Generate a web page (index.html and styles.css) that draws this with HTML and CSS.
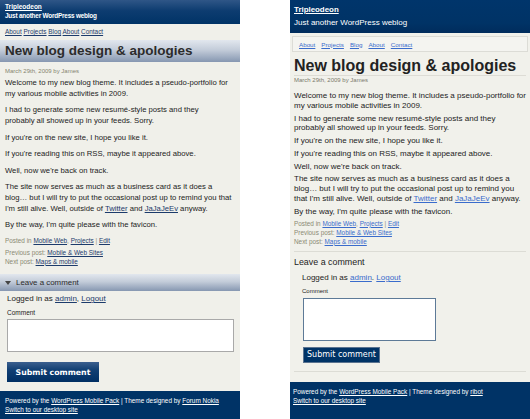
FILE: index.html
```html
<!DOCTYPE html>
<html>
<head>
<meta charset="utf-8">
<link rel="stylesheet" href="styles.css">
</head>
<body>
<div class="screens">
  <div class="phone lp">
    <header class="l-head">
      <a class="l-site" href="#">Tripleodeon</a>
      <div class="l-tag">Just another WordPress weblog</div>
    </header>
    <nav class="l-nav"><a href="#">About</a> <a href="#">Projects</a> <a href="#">Blog</a> <a href="#">About</a> <a href="#">Contact</a></nav>
    <h1 class="l-title">New blog design &amp; apologies</h1>
    <div class="l-meta">March 29th, 2009 by James</div>
    <div class="l-body">
      <p>Welcome to my new blog theme. It includes a pseudo-portfolio for my various mobile activities in 2009.</p>
      <p>I had to generate some new resumé-style posts and they<br>probably all showed up in your feeds. Sorry.</p>
      <p>If you're on the new site, I hope you like it.</p>
      <p>If you're reading this on RSS, maybe it appeared above.</p>
      <p>Well, now we're back on track.</p>
      <p>The site now serves as much as a business card as it does a blog… but I will try to put the occasional post up to remind you that I'm still alive. Well, outside of <a href="#">Twitter</a> and <a href="#">JaJaJeEv</a> anyway.</p>
      <p>By the way, I'm quite please with the favicon.</p>
    </div>
    <div class="l-small l-posted">Posted in <a href="#">Mobile Web</a>, <a href="#">Projects</a> | <a href="#">Edit</a></div>
    <div class="l-small l-nextprev">Previous post: <a href="#">Mobile &amp; Web Sites</a><br>Next post: <a href="#">Maps &amp; mobile</a></div>
    <div class="l-band"><span class="tri"></span>Leave a comment</div>
    <div class="l-form">
      <div class="l-logged">Logged in as <a href="#">admin</a>, <a href="#">Logout</a></div>
      <div class="l-label">Comment</div>
      <div class="l-area"></div>
      <div class="l-btn">Submit comment</div>
    </div>
    <footer class="l-foot">
      <div>Powered by the <a href="#">WordPress Mobile Pack</a> | Theme designed by <a href="#">Forum Nokia</a></div>
      <div><a href="#">Switch to our desktop site</a></div>
    </footer>
  </div>

  <div class="phone rp">
    <header class="r-head">
      <a class="r-site" href="#">Tripleodeon</a>
      <div class="r-tag">Just another WordPress weblog</div>
    </header>
    <nav class="r-nav"><a href="#">About</a><a href="#">Projects</a><a href="#">Blog</a><a href="#">About</a><a href="#">Contact</a></nav>
    <h1 class="r-title">New blog design &amp; apologies</h1>
    <div class="r-meta">March 29th, 2009 by James</div>
    <div class="r-body">
      <p>Welcome to my new blog theme. It includes a pseudo-portfolio for my various mobile activities in 2009.</p>
      <p>I had to generate some new resumé-style posts and they<br>probably all showed up in your feeds. Sorry.</p>
      <p>If you're on the new site, I hope you like it.</p>
      <p>If you're reading this on RSS, maybe it appeared above.</p>
      <p>Well, now we're back on track.</p>
      <p>The site now serves as much as a business card as it does a blog… but I will try to put the occasional post up to remind you that I'm still alive. Well, outside of <a href="#">Twitter</a> and <a href="#">JaJaJeEv</a> anyway.</p>
      <p>By the way, I'm quite please with the favicon.</p>
    </div>
    <div class="r-small r-posted">Posted in <a href="#">Mobile Web</a>, <a href="#">Projects</a> | <a href="#">Edit</a></div>
    <div class="r-small r-nextprev">Previous post: <a href="#">Mobile &amp; Web Sites</a><br>Next post: <a href="#">Maps &amp; mobile</a></div>
    <div class="r-hr"></div>
    <div class="r-leave">Leave a comment</div>
    <div class="r-form">
      <div class="r-logged">Logged in as <a href="#">admin</a>. <a href="#">Logout</a></div>
      <div class="r-label">Comment</div>
      <div class="r-area"></div>
      <div class="r-btn">Submit comment</div>
    </div>
    <div class="r-hr r-hr2"></div>
    <footer class="r-foot">
      <div>Powered by the <a href="#">WordPress Mobile Pack</a> | Theme designed by <a href="#">ribot</a></div>
      <div><a href="#">Switch to our desktop site</a></div>
    </footer>
  </div>
</div>
</body>
</html>
```

FILE: styles.css
```css
* { box-sizing: border-box; }
html, body { margin: 0; padding: 0; background: #fff; }
body { font-family: "Liberation Sans", Arial, sans-serif; color: #222; }
a { color: inherit; }
p { margin: 0; }

.screens { display: flex; gap: 50px; width: 530px; height: 419px; overflow: hidden; }
.phone { width: 240px; height: 419px; display: flex; flex-direction: column; background: #f0f0ea; overflow: hidden; }

/* ---------- left ---------- */
.l-head {
  height: 24px; padding: 3px 5px 0;
  background: linear-gradient(to bottom, #2f5687 0%, #0d3c70 45%, #003366 100%);
  color: #fff;
}
.l-site { display: block; font-weight: bold; font-size: 6.5px; line-height: 8px; color: #fff; }
.l-tag { font-size: 6.4px; line-height: 9px; font-weight: bold; letter-spacing: -0.2px; }
.l-nav { padding: 4px 5px; font-size: 6.4px; line-height: 8px; color: #1c3b6b; }
.l-title {
  margin: 0; height: 22px; padding: 0 5px;
  font-size: 13.5px; line-height: 22px; font-weight: bold; color: #2b2b2b;
  background: linear-gradient(to bottom, #e2e7ee 0%, #c3ccd9 45%, #8697b1 100%);
}
.l-meta { padding: 5px 5px 0; font-size: 6px; line-height: 8px; color: #85856f; }
.l-body { padding: 3px 5px 0; font-size: 7.7px; line-height: 10.8px; display: flex; flex-direction: column; gap: 5.7px; }
.l-body a { color: #1c3b6b; }
.l-small { padding: 0 5px; font-size: 6.4px; line-height: 8.4px; color: #8a8a74; }
.l-small a { color: #1c3b6b; }
.l-posted { margin-top: 6px; }
.l-nextprev { margin-top: 4px; }
.l-band {
  margin-top: 8px; height: 17px; padding-left: 5px;
  display: flex; align-items: center; gap: 5px;
  font-size: 7.9px; color: #2b2b2b;
  background: linear-gradient(to bottom, #e2e7ee 0%, #c3ccd9 45%, #8697b1 100%);
}
.tri { width: 0; height: 0; border-left: 3.5px solid transparent; border-right: 3.5px solid transparent; border-top: 4px solid #444; }
.l-form { padding: 3px 7px 0; }
.l-logged { font-size: 8px; line-height: 10px; }
.l-logged a { color: #1c3b6b; }
.l-label { margin-top: 5px; font-size: 6.5px; line-height: 8px; }
.l-area { margin-top: 2px; width: 227px; height: 33px; background: #fff; border: 1px solid #a9a9a9; }
.l-btn {
  margin-top: 10px; width: 92px; height: 20px;
  display: flex; align-items: center; justify-content: center;
  font-family: "DejaVu Sans", Verdana, sans-serif; font-weight: bold; font-size: 7.8px; color: #fff;
  background: linear-gradient(to bottom, #3b5f8e 0%, #113f73 40%, #002f63 100%);
}
.l-foot { margin-top: auto; height: 28px; padding: 5px 5px 0; background: #003366; color: #fff; font-size: 6.4px; line-height: 9px; }

/* ---------- right ---------- */
.rp { background: #f1f1eb; }
.r-head { height: 33px; padding: 5px 4px 0; background: linear-gradient(to bottom, #00356b 0%, #003366 70%, #002c5c 100%); color: #fff; }
.r-site { display: block; font-weight: bold; font-size: 7.9px; line-height: 10px; color: #fff; }
.r-tag { margin-top: 3px; font-size: 8px; line-height: 10px; }
.r-nav {
  margin: 3px 2px 0; height: 16px; padding: 0 6px;
  display: flex; align-items: center; gap: 6px;
  border: 1px solid #dcdcd6; background: #f4f4f0;
  font-size: 6.25px; color: #3a6ccc;
}
.r-title { margin: 5px 4px 0; font-size: 16px; line-height: 18px; font-weight: bold; color: #222; border-bottom: 1px solid #dddcd5; }
.r-meta { margin: 0 4px; font-size: 6px; line-height: 8px; color: #7b7b6c; }
.r-body { margin: 7px 4px 0; font-size: 8px; line-height: 9.7px; display: flex; flex-direction: column; gap: 3.1px; }
.r-body a { color: #3a6ccc; }
.r-small { margin: 0 4px; font-size: 6.4px; line-height: 8.4px; color: #8a8a74; }
.r-small a { color: #3a6ccc; }
.r-posted { margin-top: 3.5px; }
.r-nextprev { margin-top: 1px; }
.r-hr { margin: 5px 4px 0; height: 1px; background: #dcdcd5; }
.r-leave { margin: 5px 4px 0; font-size: 8.9px; line-height: 11px; color: #222; }
.r-form { padding: 5px 12px 0; }
.r-logged { font-size: 8px; line-height: 10px; }
.r-logged a { color: #3a6ccc; }
.r-label { margin-top: 4.4px; font-size: 6px; line-height: 8px; }
.r-area { margin-top: 2.3px; margin-left: 1px; width: 133px; height: 43px; background: #fff; border: 1px solid #5d7a97; }
.r-btn {
  margin-top: 6px; margin-left: 1px; width: 77px; height: 16px;
  display: flex; align-items: center; justify-content: center;
  font-family: "DejaVu Sans", Verdana, sans-serif; font-size: 8px; color: #fff;
  background: #003366; border: 1px solid #5a7390;
}
.r-hr2 { margin-top: 8px; }
.r-foot { margin-top: auto; height: 37px; padding: 5px 3px 0; background: #003366; color: #fff; font-size: 6.4px; line-height: 9.3px; }
```
